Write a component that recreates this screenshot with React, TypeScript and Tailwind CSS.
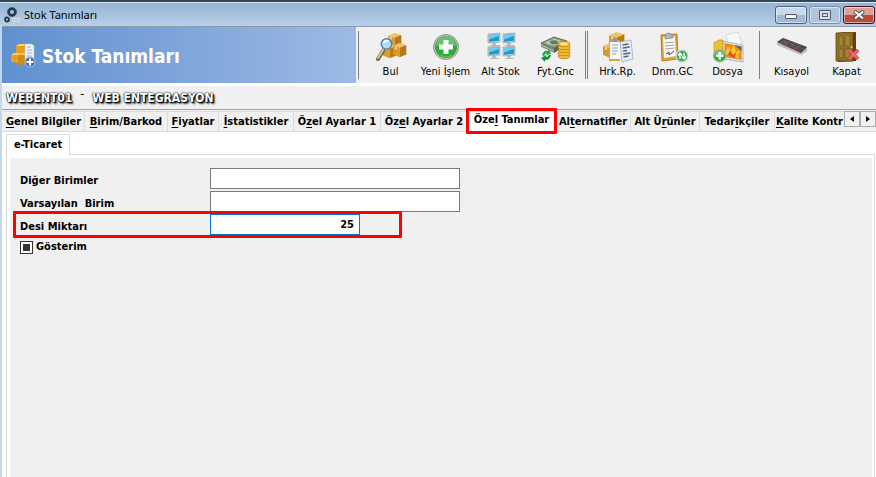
import { useEffect, useRef } from 'react';
import type { ReactNode } from 'react';

const Box = ({ x, y, s }: { x: number; y: number; s: number }) => (
  <g transform={`translate(${x} ${y}) scale(${s})`}>
    <path d="M0 3 L7 0 L14 2 L7 5z" fill="#efc468" />
    <path d="M0 3 L7 5 V15 L0 12z" fill="#d99a2b" />
    <path d="M7 5 L14 2 V12 L7 15z" fill="#b87815" />
    <path d="M2 3.8 L4 4.4 V7 L2 6.4z" fill="#f6d894" />
  </g>
);

const Plus = ({ x, y, s }: { x: number; y: number; s: number }) => (
  <g transform={`translate(${x} ${y}) scale(${s})`}>
    <circle cx="13" cy="13" r="12.500" fill="#c4c9c4" stroke="#8e948e" />
    <circle cx="13" cy="13" r="11" fill="#2fa836" />
    <path d="M3 12 a10 10 0 0 1 20 0 q-10 -4 -20 0z" fill="#6cbf70" />
    <path d="M7 20 q6 5 12 0 q-1 3-6 3t-6-3z" fill="#7fe05a" />
    <path d="M10.500 6h5v4.500h4.500v5h-4.500v4.500h-5v-4.500H6v-5h4.500z" fill="#fff" />
  </g>
);

const Screen = ({ x, y }: { x: number; y: number }) => (
  <g transform={`translate(${x} ${y})`}>
    <path d="M1 1 L13 0 V9 L1 10z" fill="#c3cbd0" stroke="#9aa4ab" strokeWidth=".7" />
    <path d="M2 2 L12 1.200 V7.800 L2 8.700z" fill="#1a9cd0" />
    <path d="M2 2 L12 1.200 V3 L2 6.500z" fill="#6ccdec" />
    <path d="M5 10h4v2h3v1H3v-1h2z" fill="#b9bec2" />
  </g>
);

const Picture = ({ children }: { children: ReactNode }) => (
  <svg viewBox="0 0 32 32" className="size-8" aria-hidden="true">
    {children}
  </svg>
);

const FindIcon = () => (
  <Picture>
    <Box x={13} y={1} s={0.95} />
    <Box x={8} y={12} s={0.95} />
    <Box x={18} y={11} s={0.95} />
    <path d="M8.500 18 L3 27" stroke="#6d6046" strokeWidth="4" strokeLinecap="round" />
    <path d="M8.500 17 L3 26" stroke="#d8c79c" strokeWidth="2" strokeLinecap="round" />
    <circle cx="11.500" cy="12" r="5.200" fill="#b4dcf6" stroke="#5a80a8" strokeWidth="1.500" />
    <path d="M8 12a3.500 3.500 0 0 1 6-3q-3 0-6 3z" fill="#fff" />
  </Picture>
);

const NewIcon = () => (
  <Picture>
    <Plus x={3} y={2} s={1} />
  </Picture>
);

const SubStockIcon = () => (
  <Picture>
    <Screen x={2} y={1} />
    <Screen x={17} y={1} />
    <Screen x={2} y={14} />
    <Screen x={17} y={14} />
  </Picture>
);

const PriceIcon = () => (
  <Picture>
    <path d="M1 11 L14 5 L27 9 L14 16z" fill="#8ba389" stroke="#4a5c49" strokeWidth=".8" />
    <path d="M5 11 L14 7 L23 9.500 L14 13.500z" fill="#c3d0bf" />
    <ellipse cx="14" cy="10.300" rx="4" ry="2" fill="#61795f" />
    <path d="M1 11 V15 L14 21 V16z" fill="#6f876d" />
    <path d="M1 13 L14 19 M1 15 L14 21" stroke="#dfe6dd" strokeWidth=".7" />
    <path d="M14 16 L27 9 V13 L14 21z" fill="#526850" />
    {[24, 21, 18, 15, 12].map((y) => (
      <ellipse key={y} cx="24" cy={y} rx="6" ry="2.800" fill="#f3bd33" stroke="#b57c0c" strokeWidth=".8" />
    ))}
    <ellipse cx="24" cy="12" rx="4" ry="1.400" fill="#ffe68c" />
    <path d="M2 23 q2-5 6-4 l1-2 2 5-5 1 1-2q-2 0-3 3z" fill="#25a545" />
    <path d="M11 23 q-1 5-6 5 l0 2-4-4 5-3v2q2 0 3-2z" fill="#149438" />
  </Picture>
);

const MoveReportIcon = () => (
  <Picture>
    <Box x={7} y={0} s={1.1} />
    <Box x={1} y={11} s={1} />
    <path d="M7 8 H18 V29 H7z" fill="#dfa03a" />
    <path d="M8 10 H18 V27 H8z" fill="#f5f8fc" />
    <path d="M10 8 q2.500-4 5 0v2h-5z" fill="#8a98aa" />
    <path d="M10 13h6M10 16h6M10 19h6M10 22h4" stroke="#8da2bc" />
    <path d="M18 10 L29 8 L31 27 L20 30z" fill="#e4edf6" stroke="#97a6b5" strokeWidth=".7" />
    <path d="M20.500 13l6-1M20.700 16l7-1M21 19l4-.5M21.300 22l7-1M21.500 25l5-1" stroke="#4f6780" strokeWidth="1.300" />
  </Picture>
);

const PeriodIcon = () => (
  <Picture>
    <path d="M4 3 L20 2 L21 27 L5 29z" fill="#e1a33a" stroke="#a56c14" strokeWidth=".8" />
    <path d="M6 5 L18 4.500 L19 24 L7 26z" fill="#f7f7f5" />
    <path d="M8 5 q-1-3 3-4 q4 0 4 3l1 2-8 1z" fill="#aeb5bd" stroke="#737b84" strokeWidth=".6" />
    <path d="M8 11l9-1M8 14l9-1M8.500 17l9-1" stroke="#9da1a5" />
    <path d="M9 22l3-2 0 3 5-4" stroke="#444" fill="none" />
    <circle cx="25" cy="24" r="6" fill="#43a65d" stroke="#c5ddca" strokeWidth="1.300" />
    <path d="M23 27v-5M21 23.500l2-2.500 2 2.500M27 21v5M25 24.500l2 2.500 2-2.500" stroke="#fff" strokeWidth="1.300" fill="none" />
  </Picture>
);

const FileIcon = () => (
  <Picture>
    <path d="M14 3 L26 0 L30 12 L17 15z" fill="#fafafa" stroke="#c7c7c7" strokeWidth=".6" />
    <path d="M2 10 h3l1-2h5v18H2z" fill="#f0c12f" stroke="#bb8e13" strokeWidth=".6" />
    <path d="M11 9 L31 13 V30 L11 27z" fill="#dfe5ea" stroke="#8696a4" strokeWidth=".6" />
    <path d="M12.500 11 L29.500 14.500 V28 L12.500 25z" fill="#ef8b13" />
    <path d="M22 13 L29.500 14.500 V20 L26 16z" fill="#7b5a58" />
    <path d="M13 22l3-8 3 4 3-5 2 7 5-2-3 5 1 4-9-4z" fill="#ffc62f" />
    <path d="M18 18l3 5 3-3-1 6-7-3z" fill="#d9531a" />
    <Plus x={1} y={17} s={0.52} />
  </Picture>
);

const KeyboardIcon = () => (
  <Picture>
    <path d="M1 10 L7 6 L31 15 V19 L25 23 L1 13z" fill="#b9b9bc" />
    <path d="M1 10 L7 6 L31 15 L25 21z" fill="#48464a" />
    <path d="M4 9.500l21 9M6.500 8l21 9M9 7.500l-4 4M14 9l-4 4M19 11l-4 4M24 13l-4 4" stroke="#77727a" strokeWidth=".6" />
    <path d="M8 10l3 1M15 12l3 1M18 16l3 1" stroke="#ac4555" strokeWidth="1.200" />
  </Picture>
);

const DoorIcon = () => (
  <Picture>
    <path d="M7 1 L25 0 V29 L7 30z" fill="#5f4210" />
    <path d="M5 1 L22 0 V29 L5 29z" fill="#927125" stroke="#5c420e" strokeWidth=".8" />
    <path d="M8 4h4v10H8zM14 3h5v11h-5zM8 17h4v9H8zM14 17h5v9h-5z" fill="#a3833a" stroke="#74571d" strokeWidth=".7" />
    <circle cx="20.500" cy="15" r="1" fill="#f3d687" />
    <path d="M18 18l9 9M27 18l-9 9" stroke="#c93540" strokeWidth="3.600" />
    <path d="M18 18l9 9M27 18l-9 9" stroke="#f3656c" strokeWidth="2.400" />
  </Picture>
);

const GearsIcon = () => (
  <svg viewBox="0 0 16 16" className="size-4" aria-hidden="true">
    <circle cx="8" cy="5" r="3.300" fill="none" stroke="#26394b" strokeWidth="2.400" />
    <circle cx="8" cy="5" r="4.500" fill="none" stroke="#26394b" strokeDasharray="1.500 1.300" />
    <circle cx="3" cy="12.500" r="2" fill="none" stroke="#26394b" strokeWidth="1.800" />
    <path d="M8 11h8l-1 4H9z" fill="#e6edf2" />
    <path d="M10 11v4M12 11v4M14 11v4M8 13h7" stroke="#9aabba" strokeWidth=".6" />
  </svg>
);

const StockIcon = () => (
  <svg viewBox="0 0 26 26" className="size-[26px]" aria-hidden="true">
    <path d="M6 3 L9 1 H16 V13 H6z" fill="#e3a020" />
    <path d="M6 3 L9 1 H16 L14 3z" fill="#f8d070" />
    <path d="M1 12 L4 10 H10 L9 20 L1 19z" fill="#e8a21c" />
    <path d="M8 12 L11 10 H18 V21 L8 22z" fill="#d48d12" />
    <path d="M1 12 L4 10 H10 L8 12zM8 12 L11 10 H18 L16 12z" fill="#f8cd67" />
    <path d="M15 1h7l2 2v14h-9z" fill="#edf3fa" stroke="#b8c8da" strokeWidth=".6" />
    <path d="M17 4h4M17 7h5M17 10h5M17 13h5" stroke="#9eb2c8" />
    <circle cx="20" cy="19" r="5" fill="#3f70b7" stroke="#a8c1e2" />
    <path d="M20 15.500v7M16.500 19h7" stroke="#fff" strokeWidth="2" />
  </svg>
);

const toolGroups = [
  {
    separator: 'border-l',
    padding: 'px-[2px]',
    tools: [
      { label: 'Bul', icon: <FindIcon /> },
      { label: 'Yeni İşlem', icon: <NewIcon /> },
      { label: 'Alt Stok', icon: <SubStockIcon /> },
      { label: 'Fyt.Gnc', icon: <PriceIcon /> },
    ],
  },
  {
    separator: 'border-x',
    padding: 'pr-1 pl-[2px]',
    tools: [
      { label: 'Hrk.Rp.', icon: <MoveReportIcon /> },
      { label: 'Dnm.GC', icon: <PeriodIcon /> },
      { label: 'Dosya', icon: <FileIcon /> },
    ],
  },
  {
    separator: 'border-l',
    padding: 'px-[2px]',
    tools: [
      { label: 'Kısayol', icon: <KeyboardIcon /> },
      { label: 'Kapat', icon: <DoorIcon /> },
    ],
  },
];

// label parts: before the access key, the key, after it
const tabs = [
  { text: ['', 'G', 'enel Bilgiler'], width: 'w-[82px]' },
  { text: ['', 'B', 'irim/Barkod'], width: 'w-[83px]' },
  { text: ['', 'F', 'iyatlar'], width: 'w-[51px]' },
  { text: ['', 'İ', 'statistikler'], width: 'w-[75px]' },
  { text: ['Ö', 'z', 'el Ayarlar 1'], width: 'w-[87px]' },
  { text: ['Öz', 'e', 'l Ayarlar 2'], width: 'w-[87px]' },
  { text: ['Öze', 'l', ' Tanımlar'], width: 'w-[88px]', active: true },
  { text: ['Al', 't', 'ernatifler'], width: 'w-[75px]' },
  { text: ['Alt Ü', 'r', 'ünler'], width: 'w-[69px]' },
  { text: ['Tedar', 'i', 'kçiler'], width: 'w-[75px]' },
  { text: ['', 'K', 'alite Kontr'], width: 'w-[70px]' },
];

function TitleBar() {
  const button = 'flex h-[18px] w-8 items-center justify-center rounded-[3px] border shadow-[inset_0_0_0_1px_#ffffff80]';
  return (
    <div className="flex h-6 items-center border-t border-[#dbe8f5] bg-linear-to-b from-[#96b4d4] to-[#b8d0e9] pl-1">
      <GearsIcon />
      <span className="ml-1 flex-1 font-['Noto_Sans'] text-[11px] leading-4 text-black">Stok Tanımları</span>
      <div className="flex gap-[2px] pr-px">
        <button aria-label="Simge durumuna küçült" className={`${button} border-[#4b617c] bg-linear-to-b from-[#c8d9ec] from-50% to-[#9fb9d6] to-50%`}>
          <span className="mt-1 h-[5px] w-3 rounded-[1px] border border-[#4d5566] bg-white" />
        </button>
        <button aria-label="Ekranı kapla" className={`${button} border-[#7891ae] bg-[#adc5df]`}>
          <span className="flex h-[10px] w-3 items-center justify-center rounded-[1px] border border-[#4d5566] bg-[#dce5ef]">
            <span className="h-1 w-[6px] border border-[#4d5566]" />
          </span>
        </button>
        <button aria-label="Kapat" className={`${button} border-[#431117] bg-linear-to-b from-[#dda096] from-50% to-[#bd4b37] to-50%`}>
          <svg viewBox="0 0 12 10" className="h-[10px] w-3">
            <path d="M1.500 1l9 8M10.500 1l-9 8" stroke="#51495a" strokeWidth="4" />
            <path d="M2 1.500l8 7M10 1.500l-8 7" stroke="#fff" strokeWidth="2.200" />
          </svg>
        </button>
      </div>
    </div>
  );
}

function Header() {
  return (
    <header className="flex h-14 bg-[#f0f0f0]">
      <div className="flex min-w-0 flex-1 items-center bg-linear-to-r from-[#6090cf] to-[#9dbae4] pt-px pl-2">
        <StockIcon />
        <h1 className="ml-[6px] text-[19px] leading-6 font-bold whitespace-nowrap text-white">Stok Tanımları</h1>
      </div>
      <div className="flex items-center pl-[2px]">
        {toolGroups.map(({ separator, padding, tools }, i) => (
          <div key={i} className="flex items-center">
            <span className={`h-12 w-[3px] border-[#808080] ${separator}`} />
            <div className={`flex pt-[2px] ${padding}`}>
              {tools.map((tool) => (
                <button key={tool.label} className="flex w-[55px] flex-col items-center whitespace-nowrap">
                  {tool.icon}
                  <span className="text-[11px] leading-4 text-black">{tool.label}</span>
                </button>
              ))}
            </div>
          </div>
        ))}
      </div>
    </header>
  );
}

function TabBar() {
  return (
    <div className="flex h-[21px] border-b border-[#dcdcdc] bg-[#f0f0f0]">
      <div role="tablist" className="flex min-w-0 flex-1 overflow-x-clip pl-px">
        {tabs.map(({ text, width, active }) => (
          <button
            key={text.join('')}
            role="tab"
            aria-selected={!!active}
            className={`relative h-5 shrink-0 border-t border-r border-[#dcdcdc] whitespace-nowrap ${width} ${active ? 'bg-white pb-[3px]' : 'pt-px'}`}
          >
            {text[0]}
            <u className="underline-offset-2">{text[1]}</u>
            {text[2]}
            {active && <span className="absolute -inset-x-[2px] -top-1 -bottom-[3px] z-10 rounded-[1px] border-3 border-[#fe0000]" />}
          </button>
        ))}
      </div>
      <div className="flex h-4 bg-[#f0f0f0]">
        <button aria-label="Sola kaydır" className="flex w-4 items-center justify-center border border-[#adadad]">
          <svg viewBox="0 0 4 6" className="h-[6px] w-1"><path d="M4 0v6L0 3z" /></svg>
        </button>
        <button aria-label="Sağa kaydır" className="flex w-4 items-center justify-center border border-[#adadad]">
          <svg viewBox="0 0 4 6" className="h-[6px] w-1"><path d="M0 0v6l4-3z" /></svg>
        </button>
      </div>
    </div>
  );
}

function Form() {
  const display = useRef<HTMLInputElement>(null);
  useEffect(() => {
    if (display.current) display.current.indeterminate = true;
  }, []);

  const row = 'flex h-[23px] items-start';
  const label = 'w-[190px] pt-[5px] leading-4 whitespace-pre';
  const field = 'h-[21px] border bg-white px-[5px] outline-none';
  return (
    <form className="flex-1 bg-[#f0f0f0] pt-[10px] pl-[10px]">
      <div className={row}>
        <label htmlFor="units" className={label}>Diğer Birimler</label>
        <input id="units" className={`${field} w-[250px] border-[#7a7a7a]`} />
      </div>
      <div className={row}>
        <label htmlFor="unit" className={label}>Varsayılan  Birim</label>
        <input id="unit" className={`${field} w-[250px] border-[#7a7a7a]`} />
      </div>
      <div className={`${row} relative w-[380px]`}>
        <label htmlFor="desi" className={label}>Desi Miktarı</label>
        <input id="desi" defaultValue="25" className={`${field} w-[150px] border-[#0078d7] text-right`} />
        <span className="pointer-events-none absolute -top-[3px] -right-[2px] -bottom-px -left-[7px] rounded-[1px] border-3 border-[#fe0000]" />
      </div>
      <label className="mt-[2px] flex w-fit items-center gap-[3px] leading-4">
        <input
          ref={display}
          type="checkbox"
          className="size-[13px] appearance-none border border-[#333333] bg-white checked:bg-[#333333] indeterminate:bg-[#333333] indeterminate:shadow-[inset_0_0_0_2px_white]"
        />
        Gösterim
      </label>
    </form>
  );
}

function App() {
  const code = '[text-shadow:0_0_1px_#000,1px_1px_1px_#000,0_0_2px_#000,2px_2px_2px_#444]';
  return (
    <div className="flex h-screen flex-col overflow-hidden border-t-2 border-[#34465a] bg-[#c5d8eb] font-['DejaVu_Sans_Condensed','DejaVu_Sans',sans-serif] text-[11px] leading-4 text-black">
      <TitleBar />
      <main className="ml-[2px] flex min-h-0 flex-1 flex-col border-t border-[#8e9aa9] bg-white">
        <Header />
        <div className="mt-[3px] flex h-6 items-center gap-2 border-b border-[#a0a0a0] bg-[#f0f0f0] pl-1 text-[12px] text-white">
          <b className={code}>WEBENT01</b>
          <span className="pb-2 text-black">-</span>
          <b className={code}>WEB ENTEGRASYON</b>
        </div>
        <div className="flex min-h-0 flex-1 flex-col bg-[#f0f0f0] pt-px font-bold">
          <TabBar />
          <div className="flex min-h-0 flex-1 flex-col bg-white pt-[2px] pr-px pl-1">
            <div role="tablist" className="flex">
              <button role="tab" aria-selected="true" className="h-[21px] w-16 border-x border-t border-[#dcdcdc] bg-white">e-Ticaret</button>
              <span className="flex-1 border-b border-[#dcdcdc]" />
            </div>
            <div className="flex min-h-0 flex-1 border-x border-[#dcdcdc] pt-[3px] pr-[2px] pl-[3px]">
              <Form />
            </div>
          </div>
        </div>
      </main>
    </div>
  );
}

export default App;
